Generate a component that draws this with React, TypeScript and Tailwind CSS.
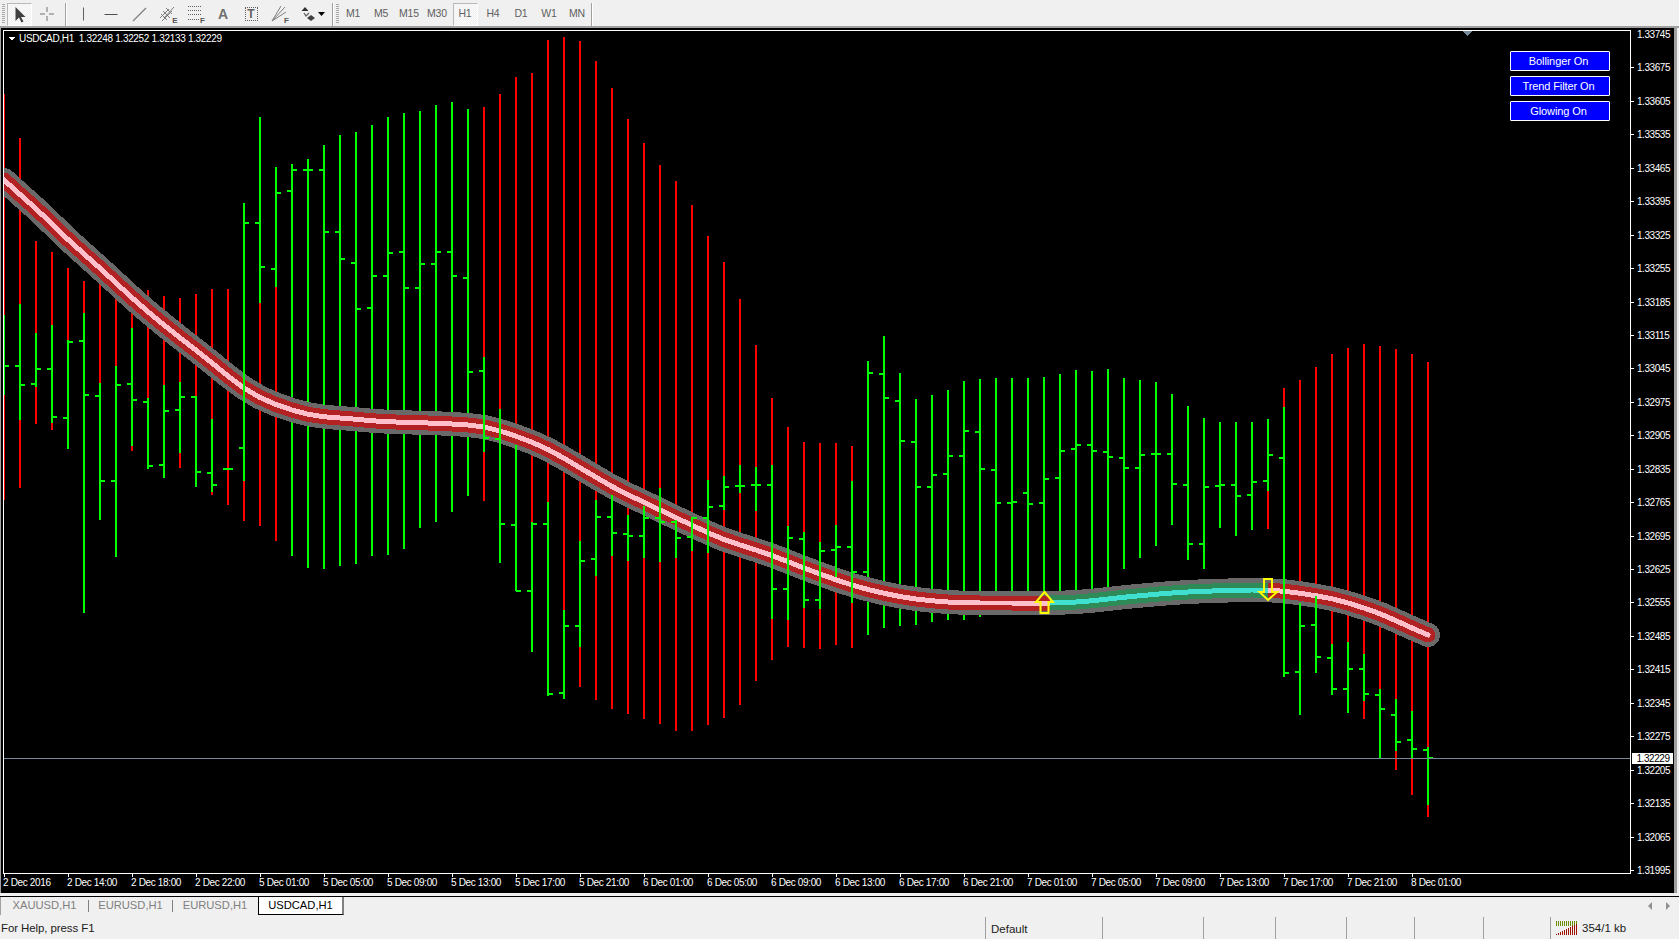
import React from 'react'

const uiFont = '"Liberation Sans", Arial, sans-serif'

// [wickTop, wickBottom, bodyTop, bodyBottom, open, close] in page pixels, one bar every 16px from x=4
const BARS: number[][] = [
  [94, 500, 315, 395, 0, 366], [138, 488, 304, 420, 366, 385], [241, 424, 333, 387, 384, 369],
  [252, 430, 325, 423, 369, 417], [268, 449, 340, 449, 418, 342], [281, 613, 313, 613, 341, 395],
  [280, 520, 383, 520, 396, 481], [290, 557, 366, 557, 481, 385], [313, 451, 328, 446, 384, 400],
  [290, 469, 398, 469, 402, 466], [296, 478, 385, 478, 465, 411], [298, 468, 382, 453, 410, 397],
  [294, 487, 396, 487, 397, 472], [289, 495, 419, 492, 473, 485], [289, 505, 0, 0, 469, 469],
  [203, 521, 203, 481, 448, 223], [117, 526, 117, 303, 223, 267], [167, 541, 167, 287, 269, 193],
  [0, 0, 164, 556, 191, 170], [0, 0, 159, 568, 170, 170], [0, 0, 145, 569, 170, 232],
  [0, 0, 135, 566, 232, 259], [0, 0, 132, 564, 263, 309], [0, 0, 125, 556, 308, 276],
  [0, 0, 117, 555, 276, 253], [0, 0, 113, 549, 252, 288], [0, 0, 111, 528, 288, 264],
  [0, 0, 105, 522, 264, 252], [0, 0, 102, 512, 252, 276], [0, 0, 109, 496, 278, 372],
  [107, 501, 357, 452, 371, 438], [94, 563, 409, 563, 439, 524], [77, 591, 445, 591, 525, 591],
  [73, 652, 522, 652, 591, 524], [40, 696, 502, 696, 524, 694], [37, 699, 610, 699, 693, 626],
  [41, 687, 541, 647, 626, 561], [61, 700, 500, 576, 559, 517], [88, 709, 495, 556, 517, 533],
  [119, 714, 515, 561, 534, 536], [143, 719, 506, 558, 536, 518], [165, 724, 488, 562, 518, 522],
  [181, 731, 520, 558, 522, 538], [205, 731, 517, 551, 537, 518], [236, 725, 480, 553, 518, 507],
  [262, 718, 476, 510, 506, 487], [299, 705, 465, 493, 486, 486], [345, 681, 467, 511, 485, 485],
  [398, 660, 465, 619, 485, 589], [427, 647, 526, 620, 589, 538], [442, 648, 532, 608, 539, 600],
  [443, 649, 542, 609, 600, 551], [443, 645, 525, 577, 550, 547], [446, 648, 481, 603, 547, 572],
  [0, 0, 361, 635, 572, 373], [0, 0, 336, 628, 374, 398], [0, 0, 373, 626, 401, 441],
  [0, 0, 399, 625, 442, 487], [0, 0, 395, 622, 487, 475], [0, 0, 390, 620, 474, 456],
  [0, 0, 381, 620, 456, 431], [0, 0, 379, 617, 432, 469], [0, 0, 378, 610, 470, 503],
  [0, 0, 378, 610, 503, 502], [0, 0, 378, 610, 493, 504], [0, 0, 377, 608, 503, 479],
  [0, 0, 374, 606, 478, 451], [0, 0, 370, 604, 449, 445], [0, 0, 371, 600, 445, 451],
  [0, 0, 369, 595, 452, 457], [0, 0, 378, 569, 458, 468], [0, 0, 380, 558, 468, 455],
  [0, 0, 382, 546, 454, 454], [0, 0, 394, 525, 454, 484], [0, 0, 406, 560, 485, 544],
  [0, 0, 418, 569, 544, 487], [0, 0, 422, 528, 486, 485], [0, 0, 422, 536, 485, 496],
  [0, 0, 422, 530, 495, 482], [419, 529, 419, 491, 481, 455], [388, 677, 407, 677, 458, 673],
  [380, 715, 603, 715, 672, 626], [367, 673, 596, 673, 625, 657], [354, 695, 644, 695, 658, 689],
  [348, 713, 642, 713, 689, 669], [344, 719, 654, 701, 669, 694], [346, 759, 689, 759, 695, 709],
  [349, 770, 699, 751, 715, 742], [354, 795, 711, 759, 740, 749], [362, 817, 747, 805, 750, 758],
]

const RIBBON_RAW: number[][] = [
  [4, 180], [20, 195], [36, 208], [52, 224], [68, 240], [84, 254], [100, 268], [116, 283], [132, 298], [148, 312],
  [164, 325], [180, 338], [196, 350], [212, 363], [228, 376], [244, 389], [260, 398], [276, 405], [292, 410], [308, 415],
  [324, 417], [340, 418], [356, 419], [372, 421], [388, 422], [404, 422], [420, 423], [436, 423], [452, 424], [468, 425],
  [484, 426], [500, 431], [516, 436], [532, 442], [548, 449], [564, 458], [580, 468], [596, 477], [612, 487], [628, 495],
  [644, 502], [660, 510], [676, 518], [692, 525], [708, 533], [724, 540], [740, 545], [756, 550], [772, 555], [788, 562],
  [804, 568], [820, 574], [836, 580], [852, 585], [868, 590], [884, 593], [900, 597], [916, 599], [932, 601], [948, 602],
  [964, 603], [980, 603], [1012, 603], [1044, 603], [1050, 603], [1060, 603], [1076, 602], [1092, 601], [1108, 599],
  [1124, 597], [1140, 596], [1156, 594], [1172, 593], [1188, 592], [1204, 591], [1220, 591], [1236, 590], [1252, 590],
  [1268, 590], [1284, 591], [1300, 593], [1316, 596], [1332, 598], [1348, 603], [1364, 608], [1380, 613], [1396, 621],
  [1412, 628], [1428, 635],
]

// light smoothing so the hand-read points don't show as kinks
const RIBBON = RIBBON_RAW.map((p, i, all) =>
  i === 0 || i === all.length - 1 ? p : [p[0], (all[i - 1][1] + 2 * p[1] + all[i + 1][1]) / 4]
)

const toPoints = (pts: number[][]) => pts.map(p => p.join(',')).join(' ')
const upSwing = RIBBON.filter(p => p[0] >= 1050 && p[0] <= 1268)

const TIME_LABELS = [
  '2 Dec 2016', '2 Dec 14:00', '2 Dec 18:00', '2 Dec 22:00', '5 Dec 01:00', '5 Dec 05:00', '5 Dec 09:00', '5 Dec 13:00',
  '5 Dec 17:00', '5 Dec 21:00', '6 Dec 01:00', '6 Dec 05:00', '6 Dec 09:00', '6 Dec 13:00', '6 Dec 17:00', '6 Dec 21:00',
  '7 Dec 01:00', '7 Dec 05:00', '7 Dec 09:00', '7 Dec 13:00', '7 Dec 17:00', '7 Dec 21:00', '8 Dec 01:00',
]

const PRICE_LABELS = Array.from({ length: 26 }, (_, i) => (1.33745 - i * 0.0007).toFixed(5))
const CHART_TOP = 28

const pressed =
  'border border-t-[#b8b8b8] border-l-[#b8b8b8] border-r-white border-b-white bg-[repeating-conic-gradient(#f0f0f0_0_25%,#fcfcfc_0_50%)] bg-[length:2px_2px]'

function Grip() {
  return <div className="h-[20px] w-[3px] shrink-0 bg-[repeating-linear-gradient(to_bottom,#a8a8a8_0,#a8a8a8_1px,transparent_1px,transparent_2px)]" />
}

function Sep() {
  return <div className="h-[23px] w-[2px] shrink-0 border-l border-r border-l-[#a0a0a0] border-r-white" />
}

function ToolIcon({ children }: { children: React.ReactNode }) {
  return <div className="flex h-[23px] w-[28px] shrink-0 items-center justify-center">{children}</div>
}

function LetterTag({ children }: { children: string }) {
  return <span className="absolute bottom-[-2px] right-[-2px] text-[8px] font-bold leading-none text-[#555]">{children}</span>
}

function DrawingTools() {
  return (
    <>
      <div className={`flex h-[23px] w-[25px] shrink-0 items-center justify-center ${pressed}`}>
        <svg width="12" height="17" viewBox="0 0 12 17">
          <path d="M1.5 1v14l3.5-3.5 2.5 5 2-1-2.5-4.5h4.5z" fill="#404040" />
        </svg>
      </div>
      <div className="w-[1px]" />
      <ToolIcon>
        <svg width="16" height="16" viewBox="0 0 16 16" stroke="#707070">
          <path d="M8 1v5M8 10v5M1 8h5M10 8h5" />
        </svg>
      </ToolIcon>
      <div className="w-[4px]" />
      <Sep />
      <div className="w-[2px]" />
      <ToolIcon>
        <svg width="16" height="16" viewBox="0 0 16 16" stroke="#606060">
          <path d="M8.5 1.5v13" />
        </svg>
      </ToolIcon>
      <ToolIcon>
        <svg width="14" height="16" viewBox="0 0 14 16" stroke="#505050" strokeWidth="1">
          <path d="M0.5 8.5h13" />
        </svg>
      </ToolIcon>
      <ToolIcon>
        <svg width="15" height="15" viewBox="0 0 15 15" stroke="#808080" strokeWidth="1.2">
          <path d="M1 14 14 1" />
        </svg>
      </ToolIcon>
      <ToolIcon>
        <div className="relative h-[18px] w-[17px]">
          <svg width="17" height="18" viewBox="0 0 17 18" stroke="#707070" fill="none">
            <path d="M1 13 10 4M3 16 13 6M5 13 15 2M4 6l7 7M2 9l6 6M7 3l6 6" strokeWidth="0.9" />
          </svg>
          <LetterTag>E</LetterTag>
        </div>
      </ToolIcon>
      <ToolIcon>
        <div className="relative h-[18px] w-[16px]">
          <svg width="16" height="18" viewBox="0 0 16 18" stroke="#606060" fill="none" strokeDasharray="1 1">
            <path d="M1 1.5h14M1 5.5h14M1 9.5h14M1 14.5h11" />
          </svg>
          <LetterTag>F</LetterTag>
        </div>
      </ToolIcon>
      <ToolIcon>
        <span className="text-[14px] font-bold leading-none text-[#707070]">A</span>
      </ToolIcon>
      <ToolIcon>
        <div className="flex h-[14px] w-[13px] items-center justify-center border border-dotted border-[#606060] text-[12px] font-bold leading-none text-[#606060]">
          T
        </div>
      </ToolIcon>
      <ToolIcon>
        <div className="relative h-[18px] w-[16px]">
          <svg width="16" height="18" viewBox="0 0 16 18" stroke="#808080" fill="none">
            <path d="M1 16 14 2M1 16 10 1M1 16 15 7" />
          </svg>
          <LetterTag>F</LetterTag>
        </div>
      </ToolIcon>
      <div className="flex w-[39px] shrink-0 items-center pl-[8px]">
        <svg width="15" height="17" viewBox="0 0 15 17">
          <path d="M4 1 7.5 5H.5z" fill="#303030" />
          <path d="M3 7l2 3 3-3" fill="none" stroke="#606060" strokeWidth="1.3" />
          <path d="M10 9l4 3-4 3-4-3z" fill="#404040" />
        </svg>
        <svg className="ml-[2px]" width="7" height="4" viewBox="0 0 7 4">
          <path d="M0 0h7L3.5 4z" fill="#000" />
        </svg>
      </div>
    </>
  )
}

function Toolbar() {
  const frames = ['M1', 'M5', 'M15', 'M30', 'H1', 'H4', 'D1', 'W1', 'MN']
  return (
    <div className="flex h-[26px] shrink-0 items-center pl-[2px] pt-[2px]" style={{ fontFamily: uiFont }}>
      <Grip />
      <div className="w-[2px]" />
      <DrawingTools />
      <Sep />
      <div className="w-[2px]" />
      <Grip />
      {frames.map(f => (
        <div key={f} className="flex h-[23px] w-[28px] shrink-0 items-center justify-center">
          <span
            className={`flex h-[23px] w-[25px] items-center justify-center whitespace-nowrap text-[10.5px] tracking-[-0.2px] text-[#606060] ${
              f === 'H1' ? `${pressed} text-[#505050]` : ''
            }`}
          >
            {f}
          </span>
        </div>
      ))}
      <Sep />
    </div>
  )
}

function Bar({ bar, index }: { bar: number[]; index: number }) {
  const x = 4 + index * 16
  const [, , top, bottom, open, close] = bar
  return (
    <g fill="#00ff00">
      {top > 0 && <rect x={x - 1} y={top} width={2} height={bottom - top} />}
      {open > 0 && <rect x={x - 5} y={open - 1} width={5} height={2} />}
      {close > 0 && <rect x={x} y={close - 1} width={5} height={2} />}
    </g>
  )
}

function PriceChart() {
  return (
    <svg className="absolute left-0 top-0" width="1674" height="867" viewBox="0 28 1674 867" shapeRendering="crispEdges">
      <defs>
        <clipPath id="plot">
          <rect x="4" y="31" width="1626" height="842" />
        </clipPath>
      </defs>
      <rect x="0" y="28" width="1" height="867" fill="#a0a0a0" />

      <g clipPath="url(#plot)">
        {BARS.map((b, i) => b[0] > 0 && <rect key={i} x={3 + i * 16} y={b[0]} width={2} height={b[1] - b[0]} fill="#ff0000" />)}
        {BARS.map((b, i) => b[0] === 0 && <Bar key={i} bar={b} index={i} />)}

        <g fill="none" strokeLinecap="round" strokeLinejoin="round">
          <polyline points={toPoints(RIBBON)} stroke="#696969" strokeWidth="24" />
          <polyline points={toPoints(RIBBON)} stroke="#b22222" strokeWidth="15" />
          <polyline points={toPoints(upSwing)} stroke="#2e8b57" strokeWidth="15" strokeLinecap="butt" />
          <polyline points={toPoints(RIBBON)} stroke="#ffc0cb" strokeWidth="5" />
          <polyline points={toPoints(upSwing)} stroke="#40e0d0" strokeWidth="5" strokeLinecap="butt" />
        </g>

        {BARS.map((b, i) => b[0] > 0 && <Bar key={i} bar={b} index={i} />)}

        <rect x="4" y="758" width="1626" height="1" fill="#778899" />

        <g fill="none" stroke="#ffff00" strokeWidth="2" shapeRendering="auto">
          <path d="M1044.5 592 1053 602H1048.5V613H1040.5V602H1036z" />
          <path d="M1264 579H1272V592H1277L1268 600 1259.5 592H1264z" />
        </g>
      </g>

      <path d="M1462 31h10l-5 5z" fill="#778899" />
      <path d="M8 37h7l-3.5 3.5z" fill="#fff" />

      <g fill="#fff">
        <rect x="3" y="30" width="1628" height="1" />
        <rect x="3" y="30" width="1" height="844" />
        <rect x="1630" y="30" width="1" height="844" />
        <rect x="3" y="873" width="1628" height="1" />
        {PRICE_LABELS.map((_, i) => i > 0 && <rect key={i} x="1631" y={Math.round(35 + i * 33.44) - 1} width={3} height={1} />)}
        {TIME_LABELS.map((_, i) => <rect key={i} x={4 + i * 64} y="874" width="1" height="3" />)}
      </g>
    </svg>
  )
}

function ChartLabels() {
  return (
    <div className="text-[10px] leading-none text-white" style={{ fontFamily: uiFont }}>
      <span className="absolute left-[19px] top-[6px] whitespace-pre text-[10px] tracking-[-0.32px]">USDCAD,H1  1.32248 1.32252 1.32133 1.32229</span>
      {PRICE_LABELS.map((p, i) => (
        <span key={p} className="absolute left-[1637px] tracking-[-0.45px]" style={{ top: Math.round(35 + i * 33.44) - CHART_TOP - 5 }}>
          {p}
        </span>
      ))}
      {TIME_LABELS.map((t, i) => (
        <span key={t} className="absolute top-[850px] whitespace-nowrap tracking-[-0.35px]" style={{ left: 3 + i * 64 }}>
          {t}
        </span>
      ))}
      <span className="absolute left-[1632px] top-[725px] flex h-[11px] w-[41px] items-center justify-center bg-white pl-[1px] tracking-[-0.45px] text-black">
        1.32229
      </span>
    </div>
  )
}

function ToggleButtons() {
  return (
    <div className="absolute left-[1510px] top-[23px] flex w-[100px] flex-col gap-[5px]" style={{ fontFamily: uiFont }}>
      {['Bollinger On', 'Trend Filter On', 'Glowing On'].map(label => (
        <div
          key={label}
          className="flex h-[20px] items-center justify-center rounded-[1px] border border-white bg-[#0000ff] pr-[3px] pt-[1px] text-[11px] tracking-[-0.1px] text-white"
        >
          {label}
        </div>
      ))}
    </div>
  )
}

function TabBar() {
  const tabs = ['XAUUSD,H1', 'EURUSD,H1', 'EURUSD,H1']
  return (
    <div className="relative mt-[3px] flex h-[19px] shrink-0 items-stretch border-t border-black text-[11.2px] leading-none" style={{ fontFamily: uiFont }}>
      <div className="flex h-[18px] w-[258px] border-l border-[#a0a0a0]">
        {tabs.map((t, i) => (
          <div key={i} className={`flex items-center justify-center text-[#808080] ${i === 0 ? 'w-[88px]' : 'w-[84px]'}`}>
            <span className={i < 2 ? 'w-full border-r border-[#808080] text-center' : 'w-full text-center'}>{t}</span>
          </div>
        ))}
      </div>
      <div className="flex h-[18px] w-[86px] items-center justify-center border-b border-l border-r-2 border-black border-r-[#808080] bg-white text-black">USDCAD,H1</div>
      <div className="ml-auto flex items-center gap-[14px] pr-[9px] text-[#a0a0a0]">
        <svg width="4" height="8" viewBox="0 0 4 8"><path d="M4 0v8L0 4z" fill="#909090" /></svg>
        <svg width="4" height="8" viewBox="0 0 4 8"><path d="M0 0v8l4-4z" fill="#909090" /></svg>
      </div>
    </div>
  )
}

function StatusBar() {
  const cells = [117, 101, 72, 71, 68, 69, 67]
  return (
    <div className="mt-[2px] flex h-[22px] shrink-0 items-center text-[11.5px] text-[#202020]" style={{ fontFamily: uiFont }}>
      <div className="w-[985px] pl-[1px] pt-[2px] tracking-[-0.1px]">For Help, press F1</div>
      {cells.map((w, i) => (
        <div key={i} className="h-full truncate border-l border-[#a0a0a0] pl-[5px] pt-[1px] leading-[22px]" style={{ width: w }}>
          {i === 0 ? 'Default' : ''}
        </div>
      ))}
      <div className="flex h-full items-center gap-[3px] border-l border-[#a0a0a0] pl-[5px]">
        <svg width="23" height="16" viewBox="0 0 23 16" shapeRendering="crispEdges">
          {Array.from({ length: 11 }, (_, i) => (
            <g key={i}>
              <rect x={i * 2} y="1" width="1" height="5" fill="#6b8e00" />
              <rect x={i * 2} y={14 - i} width="1" height={i + 1} fill="#a01000" />
            </g>
          ))}
        </svg>
        <span className="pt-[2px]">354/1 kb</span>
      </div>
    </div>
  )
}

export default function App() {
  return (
    <div className="flex h-[939px] w-[1679px] flex-col overflow-hidden bg-[#f0f0f0]">
      <Toolbar />
      <div className="h-[2px] shrink-0 bg-[#a0a0a0]" />
      <div className="flex h-[865px] shrink-0">
        <div className="relative h-[865px] w-[1674px] overflow-hidden bg-black">
          <PriceChart />
          <ChartLabels />
          <ToggleButtons />
        </div>
        <div className="h-full w-[3px] bg-[#a0a0a0]" />
      </div>
      <TabBar />
      <StatusBar />
    </div>
  )
}
